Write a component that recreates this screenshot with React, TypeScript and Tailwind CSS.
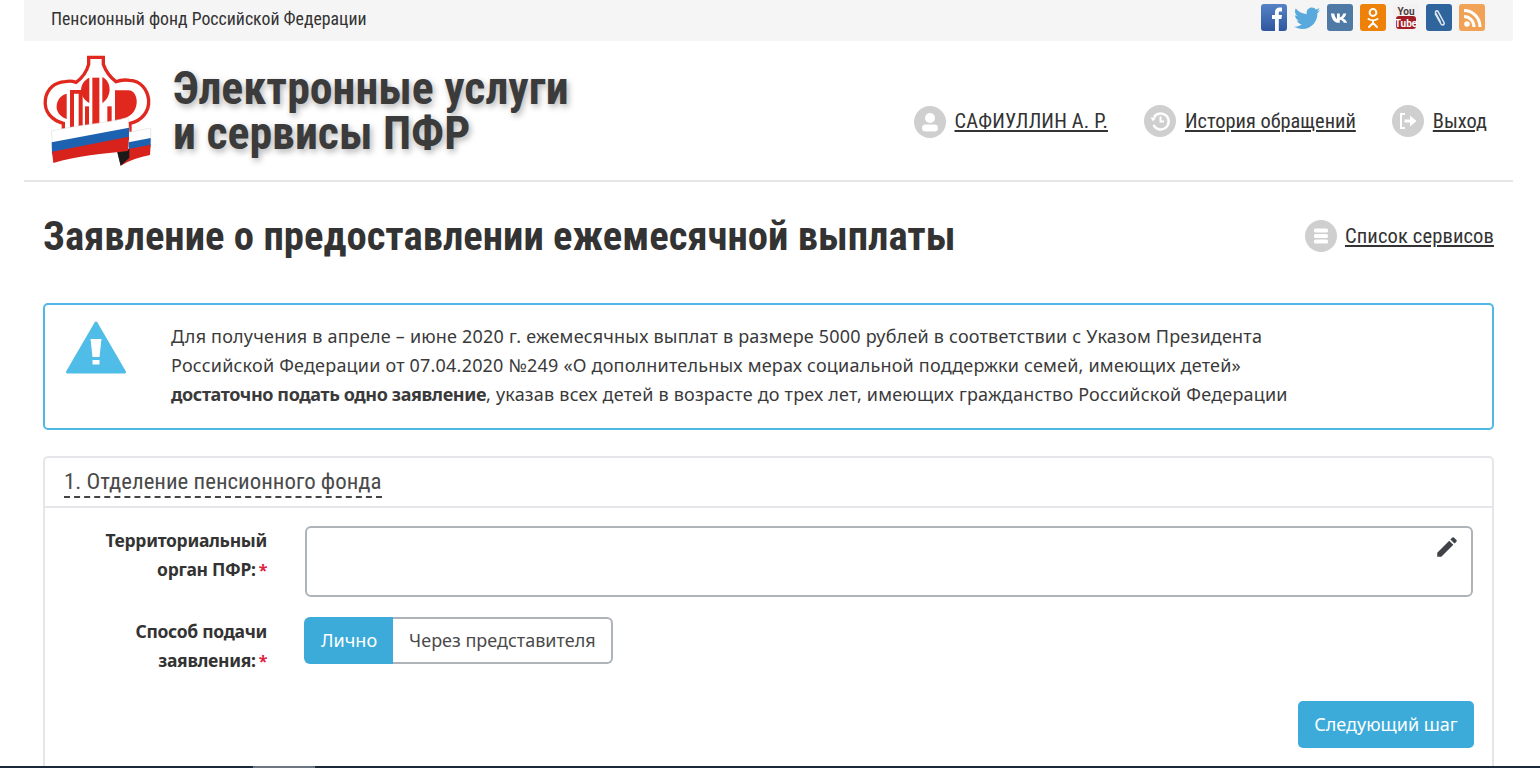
import { MdEdit } from 'react-icons/md'

const Logo = () => (
  <svg viewBox="0 0 405 390" className="mt-[-2px] h-[130px] w-[135px] shrink-0">
    {/* crown outline */}
    <path
      d="M176 37 H220 V58 C228 80 245 100 258 110 C272 104 285 104 300 106 C330 108 352 130 356 165 C358 200 335 228 300 235 V262 H100 V235 C65 226 42 200 46 165 C50 130 75 112 105 110 C115 108 128 108 138 112 C155 100 170 80 176 58 Z"
      fill="#fff"
      stroke="#e0281e"
      strokeWidth="10"
    />
    {/* inner shapes of the emblem */}
    <path d="M110 146 C90 150 78 170 80 190 C82 205 95 218 110 222 Z" fill="#e0281e" />
    <path d="M255 136 H295 C312 136 322 155 320 175 C318 200 300 218 275 222 V250 H255 Z" fill="#e0281e" />
    <path d="M120 135 H158 V250 H146 V146 H132 V250 H120 Z" fill="#e0281e" />
    <path d="M187 98 H208 V250 H187 Z" fill="#e0281e" />
    <path d="M178 98 C150 110 140 152 178 174 Z" fill="#e0281e" />
    <path d="M217 96 C246 110 246 155 217 174 Z" fill="#e0281e" />
    <path d="M232 184 H245 V250 H232 Z" fill="#e0281e" />
    <path d="M165 184 H177 V250 H165 Z" fill="#e0281e" />
    {/* flag back piece */}
    <path d="M296 262 L362 249 V290 L296 304 Z" fill="#fff" stroke="#d5d5d5" strokeWidth="1.5" />
    <path d="M296 292 L362 279 V305 L296 318 Z" fill="#1d62b0" />
    <path d="M296 312 L362 299 L360 330 C330 336 298 346 272 362 L262 322 Z" fill="#d8231c" />
    <path d="M262 322 L298 312 V338 L272 362 Z" fill="#1a1a1a" />
    {/* flag front piece */}
    <path d="M64 258 C140 240 220 236 294 218 L298 262 L68 305 Z" fill="#fff" stroke="#d5d5d5" strokeWidth="1.5" />
    <path d="M65 292 L297 248 V284 L66 328 Z" fill="#1d62b0" />
    <path d="M66 320 L297 275 L294 318 C220 326 140 332 70 354 Z" fill="#d8231c" />
  </svg>
)

const Social = () => (
  <div className="mt-[4px] flex gap-[7px] self-start">
    <svg viewBox="0 0 26 27" className="h-[27px] w-[26px]">
      <defs>
        <linearGradient id="fbGrad" x1="0" y1="0" x2="0" y2="1">
          <stop offset="0" stopColor="#5583c6" />
          <stop offset="1" stopColor="#2f569f" />
        </linearGradient>
      </defs>
      <rect width="26" height="27" rx="3" fill="url(#fbGrad)" />
      <path d="M14 27 V15 H11 V11 H14 V8 C14 5 16 3.5 18.5 3.5 H21 V7.5 H19 C18 7.5 17.8 8 17.8 8.8 V11 H21 L20.4 15 H17.8 V27 Z" fill="#fff" />
    </svg>
    <svg viewBox="0 0 26 27" className="h-[27px] w-[26px]">
      <path d="M26 6 C25 6.8 24 7.2 23 7.4 C24 6.6 25 5.4 25.4 4 C24.3 4.8 23 5.2 21.8 5.4 C20.8 4.3 19.4 3.6 17.9 3.6 C15 3.6 12.6 6 12.6 9 C12.6 9.4 12.6 9.8 12.8 10.2 C8.4 10 4.4 7.8 1.8 4.6 C1.3 5.4 1 6.4 1 7.4 C1 9.3 2 10.9 3.4 11.9 C2.6 11.9 1.7 11.6 1 11.2 C1 13.8 2.9 16 5.3 16.5 C4.5 16.7 3.7 16.7 2.9 16.6 C3.6 18.7 5.5 20.2 7.8 20.3 C5.4 22.2 2.8 23 0 22.6 C2.4 24.1 5.2 25 8.1 25 C18 25 23.4 17 23.4 10 V9.3 C24.5 8.5 25.4 7.3 26 6 Z" fill="#5aa9dd" />
    </svg>
    <svg viewBox="0 0 26 27" className="h-[27px] w-[26px]">
      <rect width="26" height="27" rx="3" fill="#4f7aa5" />
      <path d="M4 9.5 H7.2 C7.7 12.3 8.8 14.3 10 15 V9.5 H12.8 V13.4 C14.2 13.2 15.6 11.6 16.3 9.5 H19.3 C18.8 11.7 17.5 13.4 16 14.3 C17.6 15 19.3 16.5 20.2 18.8 H16.9 C16.1 17.1 14.7 15.9 12.8 15.7 V18.8 H11.8 C7.5 18.8 4.5 15.5 4 9.5 Z" fill="#fff" />
    </svg>
    <svg viewBox="0 0 26 27" className="h-[27px] w-[26px]">
      <rect width="26" height="27" rx="3" fill="#ee8208" />
      <circle cx="13" cy="8.5" r="3.4" fill="none" stroke="#fff" strokeWidth="2" />
      <path d="M8.5 15 C11 16.6 15 16.6 17.5 15 M13 17 V19 M9 23 L13 19 L17 23" fill="none" stroke="#fff" strokeWidth="2" strokeLinecap="round" />
    </svg>
    <svg viewBox="0 0 26 27" className="h-[27px] w-[26px]">
      <rect width="26" height="27" rx="3" fill="#f3f1f1" />
      <text x="13" y="10.5" textAnchor="middle" fontFamily="'Roboto', sans-serif" fontSize="10" fontWeight="700" fill="#4a3b3b">You</text>
      <rect x="3" y="12" width="20" height="13" rx="3" fill="#a21e26" />
      <text x="13" y="22.5" textAnchor="middle" fontFamily="'Roboto', sans-serif" fontSize="10" fontWeight="700" fill="#fff">Tube</text>
    </svg>
    <svg viewBox="0 0 26 27" className="h-[27px] w-[26px]">
      <rect width="26" height="27" rx="3" fill="#2f659c" />
      <path d="M9 9.5 L15 20 C16 22 19 20.5 18 18.5 L12 7.5 C11 6 8.8 7.2 9.7 9 L14.5 18" fill="none" stroke="#dfe8f0" strokeWidth="1.5" />
    </svg>
    <svg viewBox="0 0 26 27" className="h-[27px] w-[26px]">
      <rect width="26" height="27" rx="3" fill="#f2a257" />
      <circle cx="8" cy="20" r="2.8" fill="#fff" />
      <path d="M5 12.5 C10.5 12.5 15 17 15 23 M5 6.5 C14 6.5 21 14 21 23" fill="none" stroke="#fff" strokeWidth="3" />
    </svg>
  </div>
)

const UserIcon = () => (
  <svg viewBox="0 0 32 32" className="mt-[2px] h-[32px] w-[32px] shrink-0">
    <circle cx="16" cy="16" r="16" fill="#cfcfcf" />
    <circle cx="16" cy="12" r="5" fill="#fff" />
    <rect x="8" y="18.5" width="16" height="7" rx="3.5" fill="#fff" />
  </svg>
)

const HistoryIcon = () => (
  <svg viewBox="0 0 32 32" className="h-[32px] w-[32px] shrink-0">
    <circle cx="16" cy="16" r="16" fill="#cfcfcf" />
    <path d="M10 12 A8 8 0 1 1 9.5 20" fill="none" stroke="#fff" strokeWidth="2.4" />
    <path d="M6.5 12.5 H12 L9 16.5 Z" fill="#fff" />
    <path d="M16.5 11.5 V16.5 H20" fill="none" stroke="#fff" strokeWidth="2" />
  </svg>
)

const ExitIcon = () => (
  <svg viewBox="0 0 32 32" className="h-[32px] w-[32px] shrink-0">
    <circle cx="16" cy="16" r="16" fill="#cfcfcf" />
    <path d="M13 9 H9 V23 H13" fill="none" stroke="#fff" strokeWidth="2" />
    <path d="M12.5 14.5 H18 V10.5 L24.5 16 L18 21.5 V17.5 H12.5 Z" fill="#fff" />
  </svg>
)

const ListIcon = () => (
  <svg viewBox="0 0 32 32" className="h-[32px] w-[32px] shrink-0">
    <circle cx="16" cy="16" r="16" fill="#cfcfcf" />
    <rect x="9" y="8.5" width="14" height="4" rx="1.5" fill="#fff" />
    <rect x="9" y="14" width="14" height="4" rx="1.5" fill="#fff" />
    <rect x="9" y="19.5" width="14" height="4" rx="1.5" fill="#fff" />
  </svg>
)

const Warning = () => (
  <svg viewBox="0 0 60 53" className="h-[53px] w-[60px] shrink-0">
    <path d="M30 2 L58.5 51 H1.5 Z" fill="#4fbde7" stroke="#4fbde7" strokeWidth="3" strokeLinejoin="round" />
    <path d="M24.5 18 H35.5 L33.5 36 H26.5 Z" fill="#fff" />
    <rect x="26.5" y="39" width="7" height="4.5" fill="#fff" />
  </svg>
)

const HeaderLink = ({ icon, label, className = '' }: { icon: React.ReactNode; label: string; className?: string }) => (
  <a className="flex items-center gap-[9px] text-[#333]">
    {icon}
    <span className={`font-['Roboto'] text-[20.4px] leading-[24px] underline [font-stretch:75%] ${className}`}>{label}</span>
  </a>
)

const Label = ({ first, second }: { first: string; second: string }) => (
  <div className="w-[222px] shrink-0 text-right font-['Noto_Sans'] text-[17.5px] leading-[29px] font-bold tracking-[-0.3px] text-[#333]">
    <div>{first}</div>
    <div>
      {second}
      <span className="ml-[3px] text-[16px] text-[#e0203c]">*</span>
    </div>
  </div>
)

export default function App() {
  return (
    <div className="flex h-[768px] w-full flex-col overflow-hidden bg-white">
      <div className="mx-6 w-[1489px] flex-1 overflow-hidden">
        <div className="flex h-[41px] items-center justify-between bg-[#f5f5f5] pr-[28px] pb-[2px] pl-[27px]">
          <span className="font-['Roboto'] text-[17.8px] text-[#333] [font-stretch:75%]">Пенсионный фонд Российской Федерации</span>
          <Social />
        </div>

        <div className="flex h-[141px] items-center justify-between border-b-2 border-[#e6e6e6] pr-[26px] pl-[6px]">
          <div className="flex items-center gap-[8px]">
            <Logo />
            <h1 className="font-['Roboto'] text-[45.8px] leading-[45px] font-bold text-[#3b3b3b] [font-stretch:75%] [text-shadow:2px_3px_6px_rgba(0,0,0,0.3)]">
              Электронные услуги
              <br />
              и сервисы ПФР
            </h1>
          </div>
          <div className="mt-[20px] flex items-center gap-[36px]">
            <HeaderLink icon={<UserIcon />} label="САФИУЛЛИН А. Р." className="tracking-[0.17px]" />
            <HeaderLink icon={<HistoryIcon />} label="История обращений" />
            <HeaderLink icon={<ExitIcon />} label="Выход" />
          </div>
        </div>

        <div className="ml-[19px] w-[1451px]">
          <div className="mt-[28px] flex items-center justify-between">
            <h2 className="font-['Roboto'] text-[40.7px] leading-[52px] font-bold text-[#333] [font-stretch:75%]">
              Заявление о предоставлении ежемесячной выплаты
            </h2>
            <a className="flex items-center gap-[8px] text-[#333]">
              <ListIcon />
              <span className="font-['Roboto'] text-[20.6px] leading-[24px] tracking-[0.1px] underline [font-stretch:75%]">Список сервисов</span>
            </a>
          </div>

          <div className="mt-[41px] flex h-[127px] items-start rounded-[5px] border-2 border-[#4fb9e3] pt-[16px] pl-[21px]">
            <Warning />
            <p className="mt-[1px] ml-[45px] font-['Noto_Sans'] text-[18px] leading-[29px] tracking-[0.2px] text-[#3a3a3a]">
              Для получения в апреле – июне 2020 г. ежемесячных выплат в размере 5000 рублей в соответствии с Указом Президента
              <br />
              Российской Федерации от 07.04.2020 №249 «О дополнительных мерах социальной поддержки семей, имеющих детей»
              <br />
              <b className="tracking-[-0.4px]">достаточно подать одно заявление</b>, указав всех детей в возрасте до трех лет, имеющих гражданство Российской Федерации
            </p>
          </div>

          <div className="mt-[26px] h-[400px] rounded-t-[5px] border-2 border-[#e4e6e9]">
            <div className="flex h-[50px] items-end border-b-2 border-[#e4e6e9] pl-[19px]">
              <span className="mb-[8px] border-b-2 border-dashed border-[#444] pt-[2px] font-['Roboto'] text-[22.85px] leading-[28px] text-[#4a4a4a] [font-stretch:75%]">
                1. Отделение пенсионного фонда
              </span>
            </div>
            <div className="pt-[18px] pr-[19px]">
              <div className="flex gap-[38px]">
                <Label first="Территориальный" second="орган ПФР:" />
                <div className="flex h-[71px] flex-1 justify-end rounded-[6px] border-2 border-[#aeb3b9] pt-[6px] pr-[11px]">
                  <MdEdit className="h-[26px] w-[26px] text-[#3f4347]" />
                </div>
              </div>
              <div className="mt-[20px] flex gap-[37px]">
                <Label first="Способ подачи" second="заявления:" />
                <div className="flex h-[47px] font-['Noto_Sans'] text-[18px]">
                  <div className="flex items-center rounded-l-[6px] bg-[#3cabd9] pr-[16px] pl-[17px] text-white">Лично</div>
                  <div className="flex items-center rounded-r-[6px] border-2 border-l-0 border-[#aeb3b9] pr-[15px] pl-[16px] text-[#4a4a4a]">Через представителя</div>
                </div>
              </div>
              <div className="mt-[25px] flex justify-end">
                <button className="-mr-px h-[47px] w-[176px] rounded-[5px] bg-[#3cabd9] font-['Noto_Sans'] text-[18px] text-white">Следующий шаг</button>
              </div>
            </div>
          </div>
        </div>
      </div>
      <div className="flex h-[2px] shrink-0 bg-[#1b2a3a]">
        <div className="ml-[253px] w-[62px] bg-[#6b7680]" />
      </div>
    </div>
  )
}
